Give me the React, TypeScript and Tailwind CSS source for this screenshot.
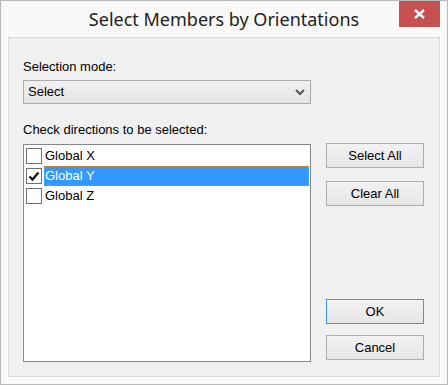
import React from "react"

const directions = [
  { label: "Global X", checked: false, selected: false },
  { label: "Global Y", checked: true, selected: true },
  { label: "Global Z", checked: false, selected: false },
]

function Checkbox({ checked }: { checked: boolean }) {
  return (
    <div className="w-[16px] h-[16px] shrink-0 border border-[#707070] bg-white flex items-center justify-center">
      {checked && (
        <svg width="12" height="11" viewBox="0 0 12 11">
          <path d="M1.5 5.5 L4.5 8.5 L10.5 1.5" fill="none" stroke="#1a1a1a" strokeWidth="2.4" />
        </svg>
      )}
    </div>
  )
}

function DialogButton({ label, primary }: { label: string; primary?: boolean }) {
  return (
    <button
      className={
        "w-[98px] h-[25px] text-[13px] text-black bg-gradient-to-b from-[#f2f2f2] to-[#e6e6e6] border " +
        (primary ? "border-[#3399ff]" : "border-[#adadad]")
      }
    >
      {label}
    </button>
  )
}

export default function App() {
  return (
    <div
      className="w-[448px] h-[385px] border border-[#b9b9b9] bg-[#f9f9f9] relative flex flex-col"
      style={{ fontFamily: '"Liberation Sans", Arial, sans-serif' }}
    >
      {/* Title bar */}
      <div className="h-[36px] flex items-center justify-center">
        <span
          className="text-[18px] text-[#222] pt-[1px]"
          style={{ fontFamily: '"Noto Sans", "Open Sans", sans-serif' }}
        >
          Select Members by Orientations
        </span>
      </div>
      <div className="absolute top-0 right-[7px] w-[41px] h-[26px] bg-[#c75050] flex items-center justify-center">
        <svg width="11" height="10" viewBox="0 0 11 10">
          <path d="M1 1 L10 9 M10 1 L1 9" stroke="white" strokeWidth="2.4" />
        </svg>
      </div>

      {/* Content panel */}
      <div className="mx-[7px] mb-[7px] flex-1 border border-[#d9d9d9] bg-[#f0f0f0] flex pl-[14px] pt-[21px] pb-[14px]">
        <div className="w-[288px] flex flex-col text-[13px] text-black">
          <div className="h-[16px] leading-[16px]">Selection mode:</div>
          <div className="mt-[5px] h-[24px] border border-[#acacac] bg-gradient-to-b from-[#f0f0f0] to-[#e5e5e5] flex items-center pl-[4px] pr-[5px]">
            <span className="flex-1">Select</span>
            <svg width="10" height="7" viewBox="0 0 10 7">
              <path d="M1 1 L5 5 L9 1" fill="none" stroke="#555" strokeWidth="2" />
            </svg>
          </div>
          <div className="mt-[18px] h-[16px] leading-[16px]">Check directions to be selected:</div>
          <div className="mt-[6px] flex-1 border border-[#828790] bg-white pt-[1px] pl-[2px] pr-[1px]">
            {directions.map((d) => (
              <div key={d.label} className="h-[20px] flex items-center">
                <Checkbox checked={d.checked} />
                <div
                  className={
                    "ml-[2px] flex-1 h-[20px] flex items-center " +
                    (d.selected
                      ? "bg-[#3399ff] text-white border border-dotted border-[#e08a2c]"
                      : "text-black pl-[1px]")
                  }
                >
                  {d.label}
                </div>
              </div>
            ))}
          </div>
        </div>

        <div className="ml-[15px] flex flex-col pt-[84px] pb-[2px]">
          <DialogButton label="Select All" />
          <div className="mt-[13px]">
            <DialogButton label="Clear All" />
          </div>
          <div className="flex-1" />
          <DialogButton label="OK" primary />
          <div className="mt-[11px]">
            <DialogButton label="Cancel" />
          </div>
        </div>
      </div>
    </div>
  )
}
